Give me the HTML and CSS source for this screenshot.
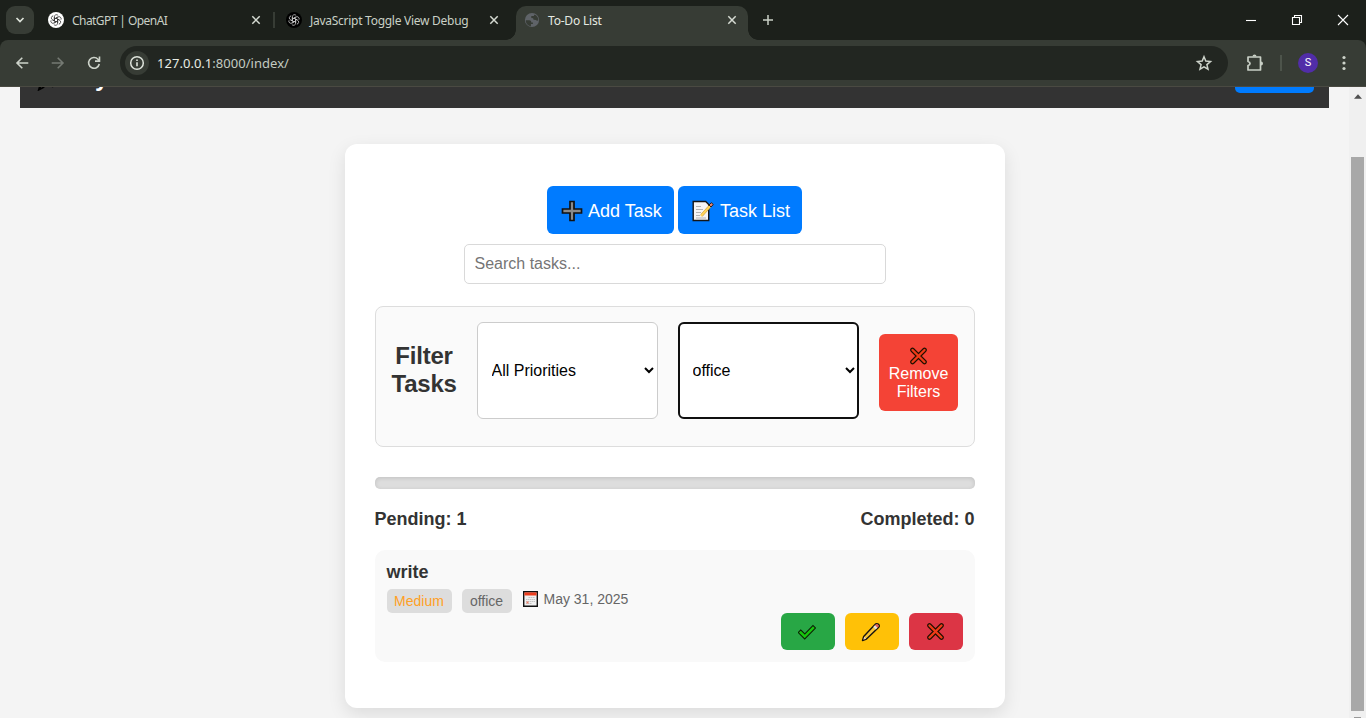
FILE: index.html
```html
<!DOCTYPE html>
<html lang="en">
<head>
<meta charset="utf-8">
<title>To-Do List</title>
<link rel="stylesheet" href="styles.css">
</head>
<body>
<svg class="defs" width="0" height="0" aria-hidden="true">
  <defs>
    <path id="petal" d="M6 9.200V4a2.600 2.600 0 0 1 4.700-1.600M6 6.800l4.300-2.500"/>
    <g id="knot" fill="none" stroke-width=".95">
      <use href="#petal"/><use href="#petal" transform="rotate(60 8 8)"/><use href="#petal" transform="rotate(120 8 8)"/>
      <use href="#petal" transform="rotate(180 8 8)"/><use href="#petal" transform="rotate(240 8 8)"/><use href="#petal" transform="rotate(300 8 8)"/>
    </g>
    <g id="cross" stroke-linecap="round" fill="none">
      <path d="M2.500 2.500l12 12M14.500 2.500l-12 12" stroke="#201000" stroke-width="4.600"/>
      <path d="M2.500 2.500l12 12M14.500 2.500l-12 12" stroke="#f03a17" stroke-width="2.400"/>
    </g>
  </defs>
</svg>
<div class="browser">
  <div class="tabstrip">
    <div class="tab-search"><svg width="10" height="10" viewBox="0 0 10 10"><path d="M1.500 3L5 6.500 8.500 3" fill="none" stroke="#dde3da" stroke-width="1.700"/></svg></div>
    <div class="tab first">
      <svg width="16" height="16" viewBox="0 0 16 16"><circle cx="8" cy="8" r="8" fill="#fff"/><g transform="translate(1.600 1.600) scale(.8)" stroke="#333"><use href="#knot"/></g></svg>
      <span class="title t1">ChatGPT | OpenAI</span>
      <svg class="x" width="10" height="10" viewBox="0 0 10 10"><path d="M1.300 1.300l7.400 7.400M8.700 1.300L1.300 8.700"/></svg>
    </div>
    <div class="tab second">
      <svg width="16" height="16" viewBox="0 0 16 16"><circle cx="8" cy="8" r="8" fill="#000"/><g transform="translate(1.600 1.600) scale(.8)" stroke="#ccc"><use href="#knot"/></g></svg>
      <span class="title t2">JavaScript Toggle View Debug</span>
      <svg class="x" width="10" height="10" viewBox="0 0 10 10"><path d="M1.300 1.300l7.400 7.400M8.700 1.300L1.300 8.700"/></svg>
    </div>
    <div class="tab active">
      <svg width="16" height="16" viewBox="0 0 16 16"><circle cx="8" cy="8" r="7.100" fill="#5f6368"/><path d="M1.800 8.300h3.400c1.800 0 2.100 1 2 2.100h1.700v1.500l-2 .2v2.200C4 14 1.700 11.300 1.800 8.300zM8.900 2l1.300.6-.3 1.400H7.300v2l1.800.3.500 1.500 2.400.1.800.9 1.500-.3c.2-3-1.700-5.700-5.400-6.500z" fill="#373c35"/></svg>
      <span class="title t3">To-Do List</span>
      <svg class="x" width="10" height="10" viewBox="0 0 10 10"><path d="M1.300 1.300l7.400 7.400M8.700 1.300L1.300 8.700"/></svg>
    </div>
    <svg class="plus" width="12" height="12" viewBox="0 0 12 12"><path d="M6 1v10M1 6h10" stroke="#c9d0c6" stroke-width="1.500"/></svg>
    <div class="window-controls">
      <svg width="12" height="12" viewBox="0 0 12 12"><path d="M1 6.500h10"/></svg>
      <svg width="12" height="12" viewBox="0 0 12 12"><path d="M1.500 3.500h7v7h-7zM3.500 3.500v-2h7v7h-2"/></svg>
      <svg width="12" height="12" viewBox="0 0 12 12"><path d="M1 1l10 10M11 1L1 11"/></svg>
    </div>
  </div>
  <div class="toolbar">
    <div class="nav-icons">
      <svg width="16" height="16" viewBox="0 0 16 16" stroke="#cdd3ca"><path d="M14.300 8H3M8.300 2.700L3 8l5.300 5.300"/></svg>
      <svg width="16" height="16" viewBox="0 0 16 16" stroke="#757a73"><path d="M1.700 8H13M7.700 2.700L13 8l-5.300 5.300"/></svg>
      <svg width="16" height="16" viewBox="0 0 16 16" stroke="#cdd3ca"><path d="M13.300 9A5.400 5.400 0 1 1 12 4.200L13.500 5.700M13.500 1.500v4.600H9"/></svg>
    </div>
    <div class="address">
      <div class="info"><svg width="16" height="16" viewBox="0 0 16 16"><circle cx="8" cy="8" r="6.300" fill="none" stroke="#dfe4dc" stroke-width="1.500"/><path d="M8 7.200v4M8 4.400v1.600" stroke="#dfe4dc" stroke-width="1.600"/></svg></div>
      <span class="url"><b>127.0.0.1</b>:8000/index/</span>
      <svg class="star" width="18" height="18" viewBox="0 0 18 18"><path d="M9 2.800l1.800 4.300 4.700.4-3.600 3.100 1.100 4.600L9 12.800l-4 2.400 1.100-4.600-3.600-3.100 4.700-.4z" fill="none" stroke="#cdd3ca" stroke-width="1.500"/></svg>
    </div>
    <svg class="puzzle" width="18" height="18" viewBox="0 0 18 18"><path d="M2 3h12.500v13H2v-4.500c2.700-.5 2.700-3.500 0-4z" fill="none" stroke="#c9d0c6" stroke-width="1.700" stroke-linejoin="round"/><path d="M6.500 2.500a2 2 0 0 1 4 0zM15 7.500a2 2 0 0 1 0 4z" fill="#c9d0c6"/></svg>
    <i class="rule"></i>
    <span class="avatar">S</span>
    <svg class="dots" width="4" height="16" viewBox="0 0 4 16" fill="#cdd3ca"><circle cx="2" cy="2.500" r="1.600"/><circle cx="2" cy="8" r="1.600"/><circle cx="2" cy="13.500" r="1.600"/></svg>
  </div>
</div>
<div class="viewport">
  <div class="page">
    <header class="site-header">
      <div class="brand">
        <svg width="21" height="22" viewBox="0 0 21 22"><path d="M3 20.500l1-3.500L16 4l3 3L7 18.500z" fill="#ddd" stroke="#000" stroke-width="2"/><path d="M14 16l3.500 1" stroke="#000" stroke-width="3"/></svg>
        <span>My</span>
      </div>
      <div class="logout"></div>
    </header>
    <main class="card">
      <div class="actions">
        <button class="primary add"><svg width="22" height="22" viewBox="0 0 22 22"><path d="M9 1.500h4V9h7.500v4H13v7.500H9V13H1.500V9H9z" fill="#8b8b8b" stroke="#111" stroke-width="1.700"/></svg>Add Task</button>
        <button class="primary list"><svg width="22" height="22" viewBox="0 0 22 22"><path d="M1.200 1.500h12.500l3 3v16H1.200z" fill="#f5f5f5" stroke="#151515" stroke-width="1.400"/><path d="M4 6.500h5M4 9.500h7M4 12.500h5M4 15.500h4M4 18h10" stroke="#b4b4b4"/><path d="M19 5L9.500 15.500" stroke="#b58b2c" stroke-width="2.800"/><path d="M19 5L9 16" stroke="#ffd45c" stroke-width="2.200"/><path d="M17 5L19.300 2.700l2 1.800L19 7z" fill="#e98272" stroke="#222"/></svg>Task List</button>
      </div>
      <input class="search" type="text" placeholder="Search tasks...">
      <section class="filters">
        <h2>Filter Tasks</h2>
        <select><option>All Priorities</option></select>
        <select class="focused"><option>office</option></select>
        <button class="remove"><svg width="17" height="18" viewBox="0 -.500 17 18"><use href="#cross"/></svg>Remove<br>Filters</button>
      </section>
      <div class="progress"></div>
      <div class="stats"><span>Pending: 1</span><span>Completed: 0</span></div>
      <article class="task">
        <h3>write</h3>
        <div class="meta">
          <span class="badge medium">Medium</span><span class="badge">office</span>
          <span class="date"><svg width="15" height="16" viewBox="0 0 15 16"><path d="M.7.7h13.600v14.600H.7z" fill="#f0f0f0" stroke="#111" stroke-width="1.400"/><path d="M1.400 1.400h12.200V4.500H1.400z" fill="#ec3d1d"/><path d="M5.500 6.500h6.500M3 8.500h9M3 10.500h9M3 12.500h6" stroke="#c4c4c4" stroke-dasharray="1.500 .5"/><path d="M3.500 10.500h2v2h-2z" fill="#ed7c67"/></svg>May 31, 2025</span>
        </div>
        <div class="task-actions">
          <button class="done"><svg width="18" height="18" viewBox="0 0 18 18"><path d="M2.700 9.500l4 4 8.300-8.500" fill="none" stroke="#0b1c05" stroke-width="4.600" stroke-linecap="square"/><path d="M2.700 9.500l4 4 8.300-8.500" fill="none" stroke="#16c60c" stroke-width="2.500" stroke-linecap="square"/></svg></button>
          <button class="edit"><svg width="20" height="20" viewBox="0 0 20 20"><path d="M1.500 18.500l1.200-4L14 2.500c1-1.200 2.600-1.100 3.500-.2s1 2.200 0 3.200L5.500 17z" fill="#f9c535" stroke="#171310" stroke-width="1.400" stroke-linejoin="round"/><path d="M14 3.300l.8-.700c1.500-1.200 3.700.7 2.400 2.300l-.8.800z" fill="#e6565b"/><path d="M12.300 5l1.700-1.700 2.400 2.400-1.700 1.700z" fill="#e5e2e0"/><path d="M2.300 17.700l1-3L5.200 16.700z" fill="#e9d5c5"/></svg></button>
          <button class="delete"><svg width="17" height="17" viewBox="0 0 17 17"><use href="#cross"/></svg></button>
        </div>
      </article>
    </main>
  </div>
  <div class="scrollbar">
    <svg width="8" height="5" viewBox="0 0 9 5"><path d="M4.500 0L9 5H0z" fill="#505050"/></svg>
    <div class="thumb"></div>
    <div class="down"></div>
  </div>
</div>
</body>
</html>
```

FILE: styles.css
```css
* { box-sizing: border-box; }
body { margin: 0; width: 1366px; height: 718px; overflow: hidden; background: #f4f4f4; color: #333; font-family: "Liberation Sans", Arial, sans-serif; }
svg { display: block; flex: none; }
.defs { position: absolute; }
button, input, select { font-family: inherit; margin: 0; }
.browser { height: 87px; background: #1c201b; font-family: "Noto Sans", sans-serif; }
.tabstrip { height: 40px; display: flex; align-items: center; }
.tab-search { width: 28px; height: 28px; margin-left: 6px; border-radius: 9px; background: #373c35; display: flex; align-items: center; justify-content: center; }
.tab { display: flex; align-items: center; height: 34px; position: relative; font-size: 12px; color: #c9d0c6; white-space: nowrap; }
.tab .x { margin-left: auto; fill: none; stroke: #d5dad2; stroke-width: 1.5; }
.first { width: 241px; padding: 0 14px; }
.first::after { content: ""; position: absolute; right: 0; top: 9px; width: 2px; height: 16px; background: #373c35; }
.second { width: 241px; padding: 0 17px 0 11px; }
.title { margin-left: 8px; padding-top: 2px; line-height: 18px; }
.t1 { letter-spacing: -.56px; }
.t2 { letter-spacing: -.27px; }
.t3 { letter-spacing: -.2px; }
.active { width: 232px; height: 34px; margin-top: 6px; padding: 0 11px 6px 8px; background: #373c35; border-radius: 10px 10px 0 0; color: #e5eae2; }
.active::before, .active::after { content: ""; position: absolute; bottom: 0; width: 10px; height: 10px; }
.active::before { left: -10px; background: radial-gradient(circle at 0 0, transparent 9.5px, #373c35 10px); }
.active::after { right: -10px; background: radial-gradient(circle at 100% 0, transparent 9.5px, #373c35 10px); }
.plus { margin-left: 14px; }
.window-controls { display: flex; gap: 34px; margin: 0 17px 0 auto; }
.window-controls svg { fill: none; stroke: #fff; stroke-width: 1.1; }
.toolbar { height: 47px; padding: 0 20px 1px 14px; display: flex; align-items: center; background: #373c35; border-bottom: 1px solid #4a4a42; border-radius: 8px 8px 0 0; }
.nav-icons { display: flex; gap: 20px; fill: none; stroke-width: 1.6; }
.address { width: 1108px; height: 34px; margin-left: 18px; padding: 0 15px 0 5px; border-radius: 17px; background: #222621; display: flex; align-items: center; }
.info { width: 24px; height: 24px; border-radius: 50%; background: #373c35; display: flex; align-items: center; justify-content: center; }
.url { margin-left: 8px; font-size: 13px; letter-spacing: .03px; color: #c4cbc1; }
.url b { font-weight: 400; color: #e8ede5; }
.star { margin-left: auto; }
.puzzle { margin-left: 18px; }
.rule { width: 2px; height: 16px; margin-left: 16px; background: #4d544b; }
.avatar { width: 20px; height: 20px; margin-left: 16px; border-radius: 50%; background: #512da8; color: #fff; font: 11px/20px Roboto, sans-serif; text-align: center; }
.dots { margin-left: auto; }
.viewport { height: 631px; display: flex; overflow: hidden; }
.page { width: 1349px; padding: 0 20px; }
.site-header { height: 60px; margin-top: -39px; padding: 0 15px; background: #333; display: flex; align-items: center; justify-content: space-between; }
.brand { display: flex; align-items: center; gap: 18px; color: #fff; font-size: 24px; line-height: 28px; font-weight: 700; }
.brand svg { margin-left: 1px; margin-top: 4px; }
.logout { width: 79px; height: 33px; margin-bottom: 3px; border-radius: 5px; background: #007bff; }
.card { width: 660px; height: 564px; margin: 36px auto 0; padding: 42px 30px 0; background: #fff; border-radius: 12px; box-shadow: 0 6px 18px rgba(0,0,0,.1); }
.actions { display: flex; justify-content: center; gap: 4px; margin-right: 1px; }
.primary { height: 48px; padding: 2px 0 0 14px; display: flex; align-items: center; gap: 5.5px; border: 0; border-radius: 6px; background: #007bff; color: #fff; font-size: 18px; white-space: nowrap; }
.add { width: 127px; }
.list { width: 124px; gap: 6.5px; }
.search { display: block; width: 422px; height: 40px; margin: 10px auto 0; padding: 0 10px; border: 1px solid #d9d9d9; border-radius: 5px; font-size: 16px; }
.search::placeholder { color: #757575; }
.filters { height: 141px; margin-top: 22px; padding: 15px 16px 0; display: flex; align-items: flex-start; border: 1px solid #ddd; border-radius: 8px; background: #fafafa; }
.filters h2 { width: 65px; margin: 20px 20px 0 0; font-size: 24px; line-height: 28px; text-align: center; letter-spacing: -.2px; }
.filters select { width: 181px; height: 97px; margin-right: 20px; padding: 10px 11px 10px 10px; border: 1px solid #ccc; border-radius: 6px; background: #fff; color: #000; font-size: 16px; }
.filters .focused { outline: 2px solid #101010; outline-offset: -2px; }
.remove { width: 79px; height: 77px; margin-top: 12px; padding: 2px 0 0 1px; border: 0; border-radius: 6px; background: #f44336; color: #fff; font-size: 16px; line-height: 18px; }
.remove svg { margin: 0 auto; }
.progress { height: 12px; margin-top: 30px; border-radius: 5px; background: #ddd; box-shadow: inset 0 1px 4px rgba(0,0,0,.13); }
.stats { margin-top: 20px; display: flex; justify-content: space-between; font-size: 18px; font-weight: 700; line-height: 20px; }
.task { height: 112px; margin-top: 21px; padding: 12px; border-radius: 10px; background: #f9f9f9; }
.task h3 { margin: 0; font-size: 18px; line-height: 20px; }
.meta { height: 24px; margin-top: 7px; display: flex; gap: 10px; font-size: 14px; color: #666; }
.badge { width: 50px; height: 24px; border-radius: 5px; background: #ddd; text-align: center; line-height: 24px; }
.medium { width: 65px; color: #ffa024; }
.date { display: flex; gap: 6px; height: 20px; align-items: center; margin-left: 1px; }
.task-actions { display: flex; justify-content: flex-end; gap: 10px; }
.task-actions button { width: 54px; height: 37px; padding: 0 1px 0 0; border: 0; border-radius: 6px; display: flex; align-items: center; justify-content: center; }
.done { background: #28a745; }
.edit { background: #ffc107; }
.delete { background: #dc3545; }
.scrollbar { width: 17px; background: #f0f0f0; display: flex; flex-direction: column; align-items: center; padding-top: 7px; }
.thumb { width: 13px; height: 554px; flex: none; margin-top: 58px; background: #a8a8a8; }
.down { width: 7px; height: 1px; flex: none; margin-top: 6px; background: #999; }
```
